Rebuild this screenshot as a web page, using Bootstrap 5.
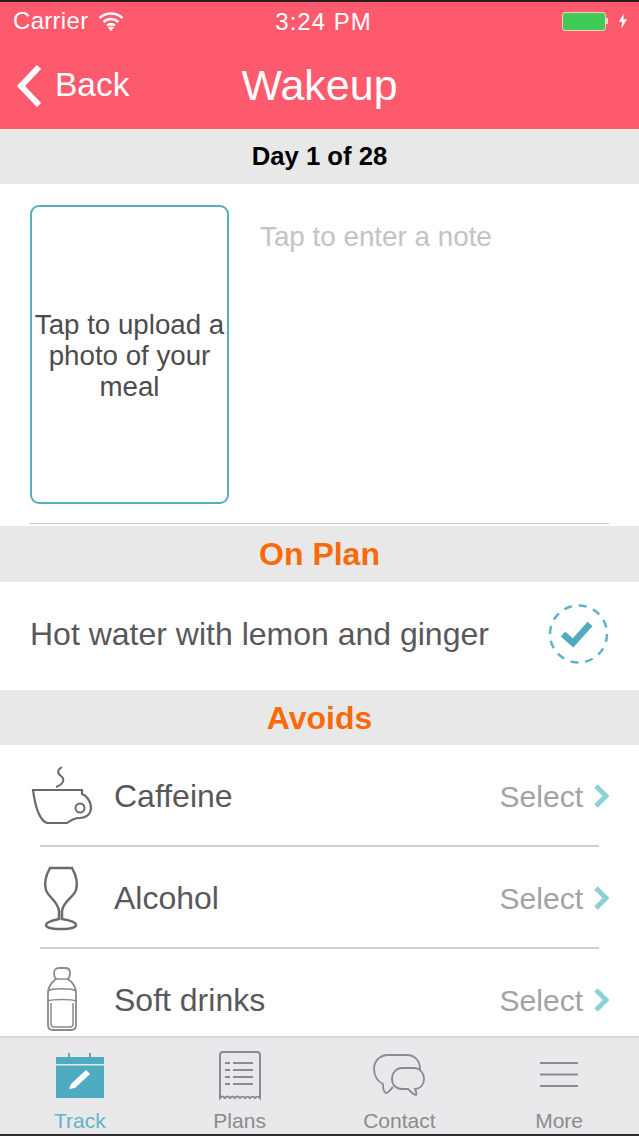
<!DOCTYPE html>
<html lang="en">
<head>
    <meta charset="UTF-8">
    <meta name="viewport" content="width=device-width, initial-scale=1.0">
    <title>Wakeup</title>
    <link href="https://cdn.jsdelivr.net/npm/bootstrap@5.3.0/dist/css/bootstrap.min.css" rel="stylesheet">
    <style>
        body {
            font-family: "Liberation Sans", Arial, sans-serif;
            background-color: #fff;
            color: #58585c;
        }

        .phone {
            width: 639px;
            height: 1136px;
            overflow: hidden;
            border-top: 2px solid #2b1a1e;
            border-bottom: 2px solid #2b2b2b;
        }

        /* Header */
        .app-head {
            background-color: #fd5a6d;
            color: #fff;
            height: 127px;
            flex: none;
        }

        .status-row {
            height: 40px;
            padding: 0 11px 2px 13px;
            font-size: 24px;
            letter-spacing: .3px;
        }

        .wifi-icon {
            margin-left: 10px;
        }

        .status-time {
            left: 8px;
            right: 0;
            top: 2px;
            text-align: center;
            font-size: 24px;
            letter-spacing: 1px;
        }

        .batt-box {
            width: 44px;
            height: 19px;
            background: #3fcb55;
            border: 1px solid #f7c9c0;
            border-radius: 3px;
        }

        .batt-nub {
            width: 2px;
            height: 6px;
            background: #f7dcd8;
            margin-right: 10px;
        }

        .nav-row {
            height: 87px;
        }

        .back-text {
            font-size: 33.5px;
            margin-left: 13px;
        }

        .head-title {
            left: 0;
            right: 0;
            top: 18px;
            text-align: center;
            font-size: 43px;
            line-height: 50px;
        }

        /* Bands */
        .band {
            background-color: #e8e8e8;
            height: 55px;
            flex: none;
            font-weight: bold;
        }

        .band-tall {
            height: 56px;
        }

        .band-day {
            font-size: 25.7px;
            color: #000;
        }

        .band-orange {
            font-size: 32px;
            font-weight: bold;
            color: #f96a0a;
        }

        /* Note area */
        .note-area {
            height: 339px;
            padding: 21px 30px 0;
            flex: none;
        }

        .photo-box {
            width: 199px;
            height: 299px;
            border: 2px solid #58adc0;
            border-radius: 9px;
            font-size: 27.7px;
            line-height: 31px;
            padding-top: 2px;
            color: #4c4c50;
            flex: none;
        }

        .note-text {
            margin-left: 31px;
            margin-top: 15px;
            font-size: 27.8px;
            line-height: 34px;
            color: #c2c2c8;
        }

        .rule-line {
            height: 1px;
            background: #c4c4c4;
            margin: 0 30px 2px;
            flex: none;
        }

        .plan-row {
            height: 108px;
            padding: 0 30px 5px;
            flex: none;
            font-size: 32px;
        }

        /* Avoid rows */
        .avoid-row {
            height: 100px;
            padding: 2px 30px 0;
            flex: none;
            font-size: 32px;
        }

        .avoid-icon {
            width: 62px;
            margin-right: 22px;
            flex: none;
        }

        .sel-text {
            color: #a2a2a8;
            font-size: 30px;
            margin-right: 10px;
        }

        .row-rule {
            height: 2px;
            background: #cfcfcf;
            margin: 0 40px;
            flex: none;
        }

        /* Tab bar */
        .tab-bar {
            left: 0;
            right: 0;
            bottom: 0;
            height: 98px;
            background: #e9e8ea;
            border-top: 2px solid #d8d8d8;
        }

        .tab-item {
            width: 160px;
            font-size: 21px;
            line-height: 30px;
            color: #8b8b8f;
        }

        .tab-item svg {
            flex: none;
        }

        .tab-on {
            color: #63b4c6;
        }
    </style>
</head>
<body>

    <div class="phone position-relative d-flex flex-column">

        <!-- Header -->
        <div class="app-head position-relative">
            <div class="status-row d-flex align-items-center position-relative">
                <span>Carrier</span>
                <svg class="wifi-icon" width="26" height="20" viewBox="0 0 26 20">
                    <path d="M1.5 7C8 1 18 1 24.500 7M5.500 11C10 7 16 7 20.500 11M9 14.500C11.500 12.800 14.500 12.800 17 14.500" fill="none" stroke="#fff" stroke-width="2.500"/>
                    <path d="M13 20L9.800 16.500C11.800 15.300 14.200 15.300 16.200 16.500Z" fill="#fff"/>
                </svg>
                <div class="status-time position-absolute">3:24 PM</div>
                <div class="ms-auto d-flex align-items-center">
                    <div class="batt-box"></div>
                    <div class="batt-nub"></div>
                    <svg width="10" height="20" viewBox="0 0 12 20">
                        <path d="M7 1L1 11H5L4 19L11 8H6.500Z" fill="#fff"/>
                    </svg>
                </div>
            </div>
            <div class="nav-row d-flex align-items-center ps-3 position-relative">
                <svg width="26" height="44" viewBox="0 0 26 44">
                    <path d="M23 3L5 22L23 41" fill="none" stroke="#fff" stroke-width="6"/>
                </svg>
                <span class="back-text">Back</span>
                <div class="head-title position-absolute">Wakeup</div>
            </div>
        </div>

        <div class="band band-day d-flex align-items-center justify-content-center">Day 1 of 28</div>

        <!-- Photo and note -->
        <div class="note-area d-flex">
            <div class="photo-box d-flex align-items-center justify-content-center text-center">Tap to upload a photo of your meal</div>
            <div class="note-text">Tap to enter a note</div>
        </div>
        <div class="rule-line"></div>

        <div class="band band-tall band-orange d-flex align-items-center justify-content-center">On Plan</div>
        <div class="plan-row d-flex align-items-center justify-content-between">
            <span>Hot water with lemon and ginger</span>
            <svg width="62" height="62" viewBox="0 0 62 62">
                <circle cx="31.500" cy="31" r="28.500" fill="none" stroke="#5db3c6" stroke-width="2.500" stroke-dasharray="8 6.920"/>
                <path d="M16 31L26 40L43 21" fill="none" stroke="#4fabc0" stroke-width="6.500"/>
            </svg>
        </div>

        <div class="band band-orange d-flex align-items-center justify-content-center">Avoids</div>

        <!-- Avoid list -->
        <div class="avoid-row d-flex align-items-center">
            <div class="avoid-icon">
                <svg width="62" height="60" viewBox="0 1 62 60">
                    <path d="M32 2C27 5 27 8 31 11C35 14 34 19 26 22" fill="none" stroke="#6a6a6a" stroke-width="2"/>
                    <path d="M3 25H52V29C56 30 61 36 61 43C61 49 56 53 50 53C45 53 42 54 37 58H17C9 55 5 40 3 25Z" fill="none" stroke="#6a6a6a" stroke-width="2.200"/>
                    <circle cx="50" cy="43" r="4.500" fill="none" stroke="#6a6a6a" stroke-width="2"/>
                </svg>
            </div>
            <span>Caffeine</span>
            <span class="sel-text ms-auto">Select</span>
            <svg width="16" height="24" viewBox="0 0 16 24"><path d="M3 2L13 12L3 22" fill="none" stroke="#8ed0d6" stroke-width="5"/></svg>
        </div>
        <div class="row-rule"></div>
        <div class="avoid-row d-flex align-items-center">
            <div class="avoid-icon">
                <svg width="62" height="66" viewBox="0 0 62 66">
                    <path d="M20 3H42C46 10 48 18 46 25C44 32 33 36 32 46V54C38 55 46 57 46 60C46 63 38 64 31 64C24 64 16 63 16 60C16 57 24 55 29 54V46C28 36 18 32 16 25C14 18 16 10 20 3Z" fill="none" stroke="#6a6a6a" stroke-width="2.500"/>
                </svg>
            </div>
            <span>Alcohol</span>
            <span class="sel-text ms-auto">Select</span>
            <svg width="16" height="24" viewBox="0 0 16 24"><path d="M3 2L13 12L3 22" fill="none" stroke="#8ed0d6" stroke-width="5"/></svg>
        </div>
        <div class="row-rule"></div>
        <div class="avoid-row d-flex align-items-center">
            <div class="avoid-icon">
                <svg width="62" height="66" viewBox="0 0 62 66">
                    <path d="M29 1H35C38 1 40 3 40 6C40 9 39 11 38 12C42 15 46 20 46 26V58C46 61 44 63 41 63H23C20 63 18 61 18 58V26C18 20 22 15 26 12C25 11 24 9 24 6C24 3 26 1 29 1Z" fill="none" stroke="#8a8a8a" stroke-width="1.800"/>
                    <path d="M26 12H38M18 24C22 21 42 21 46 24M18 34C22 32 42 32 46 34M21 36V57C21 59 22 60 24 60H40C42 60 43 59 43 57V36" fill="none" stroke="#8a8a8a" stroke-width="1.500"/>
                </svg>
            </div>
            <span>Soft drinks</span>
            <span class="sel-text ms-auto">Select</span>
            <svg width="16" height="24" viewBox="0 0 16 24"><path d="M3 2L13 12L3 22" fill="none" stroke="#8ed0d6" stroke-width="5"/></svg>
        </div>

        <!-- Tab bar -->
        <div class="tab-bar position-absolute d-flex">
            <div class="tab-item tab-on d-flex flex-column align-items-center pt-2">
                <svg width="48" height="60" viewBox="0 0 48 60">
                    <path d="M13 7V11M34 7V11" stroke="#4fabc2" stroke-width="2"/>
                    <path d="M0 11H48V18H0ZM0 19.500H48V52H0Z" fill="#4fabc2"/>
                    <path d="M13 43L15 38L30 24L34 28L19 42Z" fill="#fff"/>
                </svg>
                <span>Track</span>
            </div>
            <div class="tab-item d-flex flex-column align-items-center pt-2">
                <svg width="42" height="60" viewBox="0 0 42 60">
                    <path d="M1 52V9C1 7 2 6 4 6H38C40 6 41 7 41 9V52C39 50 38 50 36 52C34 50 33 50 31 52C29 50 28 50 26 52C24 50 23 50 21 52C19 50 18 50 16 52C14 50 13 50 11 52C9 50 8 50 6 52C4 50 3 50 1 52Z" fill="none" stroke="#8b8b8f" stroke-width="2"/>
                    <path d="M6 17H11M14 17H34M6 24H11M14 24H34M6 31H11M14 31H34M6 38H11M14 38H34" stroke="#8b8b8f" stroke-width="2"/>
                </svg>
                <span>Plans</span>
            </div>
            <div class="tab-item d-flex flex-column align-items-center pt-2">
                <svg width="52" height="60" viewBox="0 0 52 60">
                    <path d="M47 23C47 15 42 9 34 9H15C7 9 1 15 1 23C1 30 5 36 10 38C10 42 10 46 13 47C15 47 17 44 20 41" fill="none" stroke="#8b8b8f" stroke-width="1.800"/>
                    <path d="M29 22H41C47 22 51 27 51 33C51 39 47 43 42 43C43 45 44 47 43 49C41 49 38 46 35 43H29C23 43 19 39 19 33C19 27 23 22 29 22Z" fill="none" stroke="#8b8b8f" stroke-width="1.800"/>
                </svg>
                <span>Contact</span>
            </div>
            <div class="tab-item d-flex flex-column align-items-center pt-2">
                <svg width="38" height="60" viewBox="0 0 38 60">
                    <path d="M0 17H38M0 28.500H38M0 40H38" stroke="#8b8b8f" stroke-width="2"/>
                </svg>
                <span>More</span>
            </div>
        </div>
    </div>

    <script src="https://cdn.jsdelivr.net/npm/bootstrap@5.3.0/dist/js/bootstrap.bundle.min.js"></script>
</body>
</html>
